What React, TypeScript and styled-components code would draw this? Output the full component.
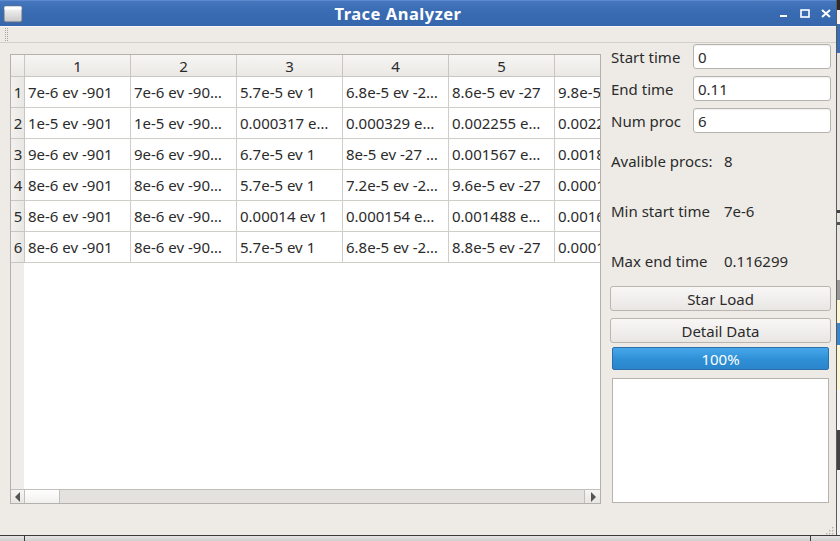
import React from "react";
import styled, { createGlobalStyle } from "styled-components";

const Global = createGlobalStyle`
  html, body { margin: 0; padding: 0; background: #d8d8d8; }
  body { font-family: "Noto Sans", "DejaVu Sans", sans-serif; }
  * { box-sizing: border-box; }
`;

const Desktop = styled.div`
  width: 840px;
  height: 541px;
  overflow: hidden;
  display: grid;
  grid-template-columns: 837px 3px;
  grid-template-rows: 535px 6px;
`;

const Window = styled.div`
  display: flex;
  flex-direction: column;
  background: #eeebe7;
  border-right: 1px solid #5a5a5a;
  overflow: hidden;
`;

const BehindStrip = styled.div`
  background: linear-gradient(
    to bottom,
    #2a2a2a 0 10px,
    #f4f4f4 10px 24px,
    #3a6fb6 24px 53px,
    #e6e4e0 53px 210px,
    #444 210px 213px,
    #e6e4e0 213px 222px,
    #555 222px 225px,
    #e6e4e0 225px 280px,
    #9a9a9a 280px 300px,
    #fbf5d2 300px 323px,
    #3a87d0 323px 345px,
    #fbf5d2 345px 390px,
    #f7f7f7 390px 430px,
    #444 430px 470px,
    #f2f2f2 470px
  );
`;

const TaskBar = styled.div`
  grid-column: 1 / span 2;
  border-top: 1px solid #3a3a3a;
  background: linear-gradient(#e4e4e4, #cfcfcf);
  display: grid;
  grid-template-columns: 25px 786px 1fr;
`;

const TaskSlot = styled.div`
  border-right: 1px solid #3a3a3a;
  &:last-child { border-right: none; }
`;

const TitleBar = styled.div`
  height: 26px;
  flex: none;
  display: flex;
  align-items: center;
  background: linear-gradient(#4677bd, #3a6cb3 40%, #3667ad);
  border-top: 1px solid #5d8ace;
  color: #fff;
`;

const WinIcon = styled.div`
  width: 24px;
  display: flex;
  justify-content: flex-end;
  padding-right: 1px;
  padding-top: 1px;
`;

const Title = styled.div`
  flex: 1;
  text-align: center;
  font-weight: bold;
  font-size: 16.5px;
  letter-spacing: 0.5px;
  padding-left: 2px;
`;

const WinButtons = styled.div`
  width: 66px;
  display: flex;
  align-items: center;
  padding-left: 4px;
`;

const WinBtn = styled.div`
  width: 21px;
  height: 20px;
  display: flex;
  align-items: center;
  justify-content: center;
`;

const ToolArea = styled.div`
  height: 17px;
  flex: none;
  border-top: 1px solid #f7f6f4;
  border-bottom: 1px solid #d3cfc9;
  padding-left: 5px;
  display: flex;
  align-items: center;
`;

const Body = styled.div`
  flex: 1;
  display: flex;
  align-items: flex-start;
  gap: 9px;
  padding: 1px 5px 0 10px;
  position: relative;
`;

const TableFrame = styled.div`
  margin-top: 10px;
  width: 591px;
  height: 450px;
  border: 1px solid #b4b1ac;
  display: flex;
  flex-direction: column;
  background: #fff;
`;

const Viewport = styled.div`
  flex: 1;
  overflow: hidden;
  background: linear-gradient(to right, #efedea 0 13px, #fff 13px);
`;

const Grid = styled.div`
  display: grid;
  grid-template-columns: 14px repeat(6, 106px);
  width: max-content;
  font-size: 15px;
  color: #2b2b2b;
`;

const HeadCell = styled.div`
  height: 22px;
  border-right: 1px solid #c9c6c1;
  border-bottom: 1px solid #c9c6c1;
  background: linear-gradient(#f6f5f3, #ebe9e5);
  display: flex;
  align-items: center;
  justify-content: center;
  white-space: nowrap;
  overflow: hidden;
`;

const RowHead = styled.div`
  height: 31px;
  border-right: 1px solid #c9c6c1;
  border-bottom: 1px solid #c9c6c1;
  background: linear-gradient(to right, #f3f2f0, #e9e7e3);
  display: flex;
  align-items: center;
  justify-content: center;
  padding-left: 1px;
`;

const Cell = styled.div`
  height: 31px;
  border-right: 1px solid #d0cdc8;
  border-bottom: 1px solid #d0cdc8;
  background: #fff;
  display: flex;
  align-items: center;
  padding-left: 3px;
  white-space: nowrap;
  overflow: hidden;
`;

const HScroll = styled.div`
  height: 14px;
  flex: none;
  border-top: 1px solid #c2bfba;
  display: grid;
  grid-template-columns: 14px 35px 1fr 16px;
  background: #e3e2de;
`;

const Arrow = styled.div<{ $right?: boolean }>`
  background: linear-gradient(#f6f5f3, #e8e6e2);
  border-right: ${(p) => (p.$right ? "none" : "1px solid #c2bfba")};
  border-left: ${(p) => (p.$right ? "1px solid #c2bfba" : "none")};
  display: flex;
  align-items: center;
  justify-content: center;
  grid-column: ${(p) => (p.$right ? "4" : "1")};
`;

const Thumb = styled.div`
  background: linear-gradient(#ffffff, #f1f0ee);
  border-right: 1px solid #c2bfba;
`;

const Panel = styled.div`
  width: 221px;
  display: flex;
  flex-direction: column;
  font-size: 15px;
  color: #2b2b2b;
`;

const FormRow = styled.div<{ $gap: number }>`
  display: grid;
  grid-template-columns: 82px 1fr;
  align-items: center;
  height: 25px;
  margin-bottom: ${(p) => p.$gap}px;
  padding-left: 1px;
  white-space: nowrap;
`;

const Input = styled.div`
  height: 25px;
  border: 1px solid #b6b3ae;
  border-radius: 3px;
  background: #fff;
  box-shadow: inset 0 1px 1px rgba(0, 0, 0, 0.06);
  display: flex;
  align-items: center;
  padding-left: 4px;
`;

const InfoRow = styled.div<{ $h: number }>`
  display: grid;
  grid-template-columns: 113px 1fr;
  align-items: center;
  height: ${(p) => p.$h}px;
  padding-left: 1px;
  white-space: nowrap;
`;

const Button = styled.div<{ $gap: number }>`
  height: 25px;
  border: 1px solid #b9b6b1;
  border-radius: 3px;
  background: linear-gradient(#f8f7f6, #e9e7e4);
  display: flex;
  align-items: center;
  justify-content: center;
  margin-bottom: ${(p) => p.$gap}px;
`;

const Progress = styled.div`
  height: 23px;
  margin: 0 2px 8px 2px;
  border: 1px solid #2c6ea8;
  border-radius: 2px;
  background: linear-gradient(#46a8ea, #2f8fd6 55%, #2b86cc);
  color: #fff;
  display: flex;
  align-items: center;
  justify-content: center;
`;

const TextBox = styled.div`
  height: 125px;
  margin: 0 2px;
  border: 1px solid #b6b3ae;
  background: #fff;
`;

const Grip = styled.div`
  position: absolute;
  right: 2px;
  bottom: 2px;
  width: 10px;
  height: 12px;
`;

const data: string[][] = [
  ["7e-6 ev -901", "7e-6 ev -90…", "5.7e-5 ev 1", "6.8e-5 ev -2…", "8.6e-5 ev -27", "9.8e-5 ev -27"],
  ["1e-5 ev -901", "1e-5 ev -90…", "0.000317 e…", "0.000329 e…", "0.002255 e…", "0.002275 e…"],
  ["9e-6 ev -901", "9e-6 ev -90…", "6.7e-5 ev 1", "8e-5 ev -27 …", "0.001567 e…", "0.001843 e…"],
  ["8e-6 ev -901", "8e-6 ev -90…", "5.7e-5 ev 1", "7.2e-5 ev -2…", "9.6e-5 ev -27", "0.000103 e…"],
  ["8e-6 ev -901", "8e-6 ev -90…", "0.00014 ev 1", "0.000154 e…", "0.001488 e…", "0.001612 e…"],
  ["8e-6 ev -901", "8e-6 ev -90…", "5.7e-5 ev 1", "6.8e-5 ev -2…", "8.8e-5 ev -27", "0.000101 e…"],
];

function WindowIcon() {
  return (
    <svg width="20" height="18" viewBox="0 0 20 18">
      <defs>
        <linearGradient id="wi" x1="0" y1="0" x2="0" y2="1">
          <stop offset="0" stopColor="#fafafa" />
          <stop offset="1" stopColor="#c9c9c9" />
        </linearGradient>
      </defs>
      <rect x="0.5" y="0.5" width="19" height="17" rx="2" fill="#5a6f8e" />
      <rect x="1.5" y="1.5" width="17" height="15" rx="1.5" fill="url(#wi)" />
      <rect x="1.5" y="1.5" width="17" height="3" fill="#ffffff" />
    </svg>
  );
}

function GripDots() {
  const dots = [];
  for (let i = 0; i < 7; i++) {
    dots.push(<rect key={"a" + i} x="0" y={i * 2} width="1" height="1" fill="#a8a49e" />);
    dots.push(<rect key={"b" + i} x="2" y={i * 2} width="1" height="1" fill="#a8a49e" />);
  }
  return (
    <svg width="3" height="14" viewBox="0 0 3 14">
      {dots}
    </svg>
  );
}

function ResizeGrip() {
  const pts: [number, number][] = [
    [8, 0], [8, 3], [5, 3], [8, 6], [5, 6], [2, 6], [8, 9], [5, 9], [2, 9],
  ];
  return (
    <svg width="10" height="12" viewBox="0 0 10 12">
      {pts.map(([x, y], i) => (
        <rect key={i} x={x} y={y + 1} width="1.4" height="1.4" fill="#b3afa9" />
      ))}
    </svg>
  );
}

export default function App() {
  return (
    <>
      <Global />
      <Desktop>
        <Window>
          <TitleBar>
            <WinIcon>
              <WindowIcon />
            </WinIcon>
            <Title>Trace Analyzer</Title>
            <WinButtons>
              <WinBtn>
                <svg width="10" height="10" viewBox="0 0 10 10">
                  <rect x="1" y="6" width="7" height="2" fill="#fff" />
                </svg>
              </WinBtn>
              <WinBtn>
                <svg width="10" height="10" viewBox="0 0 10 10">
                  <rect x="1" y="1" width="8" height="7" fill="none" stroke="#fff" strokeWidth="1.6" />
                </svg>
              </WinBtn>
              <WinBtn>
                <svg width="10" height="10" viewBox="0 0 10 10">
                  <path d="M1 1 L9 8 M9 1 L1 8" stroke="#fff" strokeWidth="2" />
                </svg>
              </WinBtn>
            </WinButtons>
          </TitleBar>
          <ToolArea>
            <GripDots />
          </ToolArea>
          <Body>
            <TableFrame>
              <Viewport>
                <Grid>
                  <HeadCell />
                  {[1, 2, 3, 4, 5, 6].map((n) => (
                    <HeadCell key={n}>{n}</HeadCell>
                  ))}
                  {data.map((row, r) => (
                    <React.Fragment key={r}>
                      <RowHead>{r + 1}</RowHead>
                      {row.map((v, c) => (
                        <Cell key={c}>{v}</Cell>
                      ))}
                    </React.Fragment>
                  ))}
                </Grid>
              </Viewport>
              <HScroll>
                <Arrow>
                  <svg width="6" height="10" viewBox="0 0 6 10">
                    <path d="M5 0 L0 5 L5 10 Z" fill="#555" />
                  </svg>
                </Arrow>
                <Thumb />
                <div />
                <Arrow $right>
                  <svg width="6" height="10" viewBox="0 0 6 10">
                    <path d="M1 0 L6 5 L1 10 Z" fill="#555" />
                  </svg>
                </Arrow>
              </HScroll>
            </TableFrame>
            <Panel>
              <FormRow $gap={7}>
                <span>Start time</span>
                <Input>0</Input>
              </FormRow>
              <FormRow $gap={7}>
                <span>End time</span>
                <Input>0.11</Input>
              </FormRow>
              <FormRow $gap={3}>
                <span>Num proc</span>
                <Input>6</Input>
              </FormRow>
              <InfoRow $h={50}>
                <span>Avalible procs:</span>
                <span>8</span>
              </InfoRow>
              <InfoRow $h={50}>
                <span>Min start time</span>
                <span>7e-6</span>
              </InfoRow>
              <InfoRow $h={49}>
                <span>Max end time</span>
                <span>0.116299</span>
              </InfoRow>
              <Button $gap={7} style={{ marginTop: 1 }}>Star Load</Button>
              <Button $gap={4}>Detail Data</Button>
              <Progress>100%</Progress>
              <TextBox />
            </Panel>
            <Grip>
              <ResizeGrip />
            </Grip>
          </Body>
        </Window>
        <BehindStrip />
        <TaskBar>
          <TaskSlot />
          <TaskSlot />
          <TaskSlot />
        </TaskBar>
      </Desktop>
    </>
  );
}
